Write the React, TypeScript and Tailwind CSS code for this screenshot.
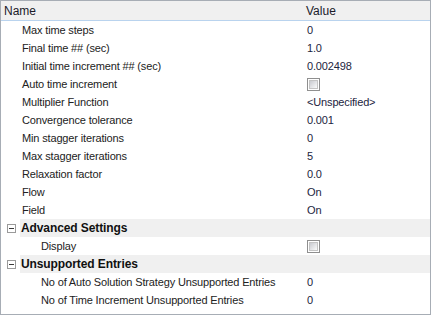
import React from "react";

type Row =
  | { kind: "item"; label: string; value: string; level: 1 | 2; check?: boolean }
  | { kind: "cat"; label: string };

const rows: Row[] = [
  { kind: "item", label: "Max time steps", value: "0", level: 1 },
  { kind: "item", label: "Final time ## (sec)", value: "1.0", level: 1 },
  { kind: "item", label: "Initial time increment ## (sec)", value: "0.002498", level: 1 },
  { kind: "item", label: "Auto time increment", value: "", level: 1, check: true },
  { kind: "item", label: "Multiplier Function", value: "<Unspecified>", level: 1 },
  { kind: "item", label: "Convergence tolerance", value: "0.001", level: 1 },
  { kind: "item", label: "Min stagger iterations", value: "0", level: 1 },
  { kind: "item", label: "Max stagger iterations", value: "5", level: 1 },
  { kind: "item", label: "Relaxation factor", value: "0.0", level: 1 },
  { kind: "item", label: "Flow", value: "On", level: 1 },
  { kind: "item", label: "Field", value: "On", level: 1 },
  { kind: "cat", label: "Advanced Settings" },
  { kind: "item", label: "Display", value: "", level: 2, check: true },
  { kind: "cat", label: "Unsupported Entries" },
  { kind: "item", label: "No of Auto Solution Strategy Unsupported Entries", value: "0", level: 2 },
  { kind: "item", label: "No of Time Increment Unsupported Entries", value: "0", level: 2 },
];

function Check() {
  return (
    <div className="w-[13px] h-[13px] border border-[#8f8f8f] bg-white p-[1px]">
      <div className="w-full h-full border border-[#c4c4c4] bg-gradient-to-br from-[#c9cbd0] to-[#fbfbfb]" />
    </div>
  );
}

function Minus() {
  return (
    <div className="w-[9px] h-[9px] border border-[#9a9a9a] bg-white flex items-center justify-center">
      <div className="w-[5px] h-[1px] bg-[#3a3a3a]" />
    </div>
  );
}

export default function App() {
  return (
    <div
      className="w-[431px] h-[315px] bg-white border border-[#a7adb5] flex flex-col text-[11px] text-[#222] tracking-[-0.15px]"
      style={{ fontFamily: '"Liberation Sans", Arial, sans-serif' }}
    >
      <div className="h-[20px] shrink-0 bg-[#f0f0f0] border-b border-[#b9d3ee] flex items-center text-[12px] text-[#1a1a2a] tracking-normal">
        <div className="w-[304px] pl-[3px]">Name</div>
        <div className="pl-[1px]">Value</div>
      </div>
      {rows.map((r, i) =>
        r.kind === "cat" ? (
          <div key={i} className="h-[18px] shrink-0 flex items-center">
            <div className="w-[19px] flex justify-center pl-[2px]">
              <Minus />
            </div>
            <div className="flex-1 h-full bg-[#f0f0f0] flex items-center font-bold text-[12px] text-[#111] pl-[1px] tracking-[-0.1px]">
              {r.label}
            </div>
          </div>
        ) : (
          <div key={i} className="h-[18px] shrink-0 flex items-center">
            <div className={`w-[305px] ${r.level === 1 ? "pl-[21px]" : "pl-[40px]"} whitespace-nowrap`}>
              {r.label}
            </div>
            <div className="pl-[1px] text-[#1c2440]">{r.check ? <Check /> : r.value}</div>
          </div>
        )
      )}
    </div>
  );
}
